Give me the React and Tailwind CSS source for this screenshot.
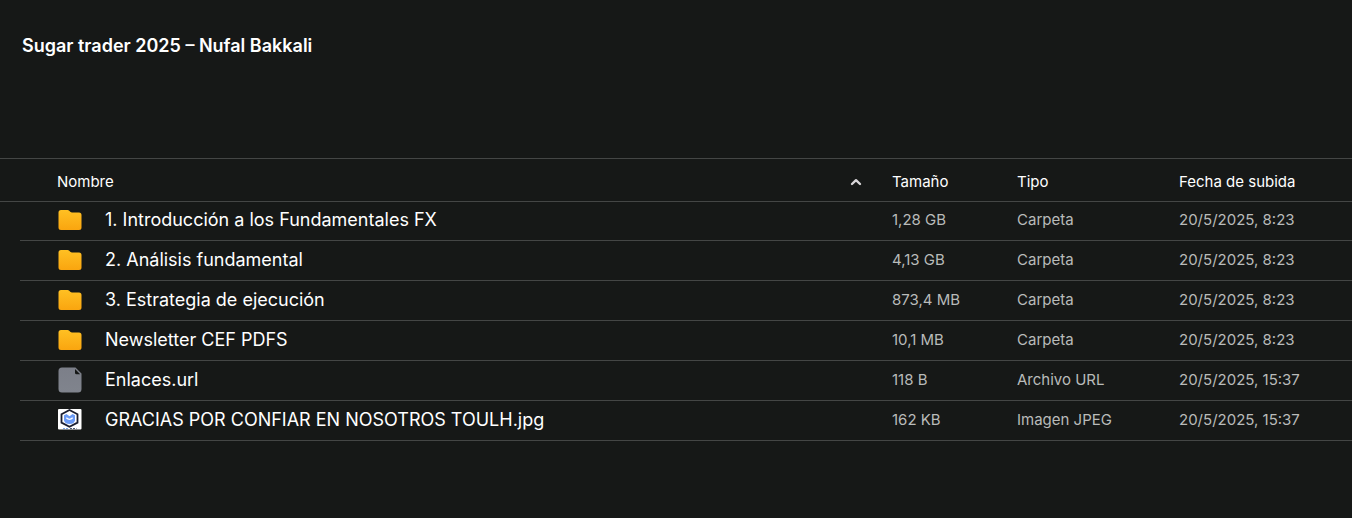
const files = [
  { name: "1. Introducción a los Fundamentales FX", size: "1,28 GB", type: "Carpeta", date: "20/5/2025, 8:23", icon: "folder" },
  { name: "2. Análisis fundamental", size: "4,13 GB", type: "Carpeta", date: "20/5/2025, 8:23", icon: "folder" },
  { name: "3. Estrategia de ejecución", size: "873,4 MB", type: "Carpeta", date: "20/5/2025, 8:23", icon: "folder" },
  { name: "Newsletter CEF PDFS", size: "10,1 MB", type: "Carpeta", date: "20/5/2025, 8:23", icon: "folder" },
  { name: "Enlaces.url", size: "118 B", type: "Archivo URL", date: "20/5/2025, 15:37", icon: "file" },
  { name: "GRACIAS POR CONFIAR EN NOSOTROS TOULH.jpg", size: "162 KB", type: "Imagen JPEG", date: "20/5/2025, 15:37", icon: "image" },
]

function FolderIcon() {
  return (
    <svg className="block h-6 w-6 shrink-0" viewBox="0 0 24 24">
      <defs>
        <linearGradient id="folder" x1="0" y1="0" x2="0" y2="1">
          <stop offset="0" stopColor="#ffc023" />
          <stop offset="1" stopColor="#faa50f" />
        </linearGradient>
      </defs>
      <path
        fill="url(#folder)"
        d="M.5 4.500A2.500 2.500 0 0 1 3 2H9.500Q10.500 2 11.300 2.800L12.200 3.700Q13 4.500 14 4.500H21A2.500 2.500 0 0 1 23.500 7V19.500A2.500 2.500 0 0 1 21 22H3A2.500 2.500 0 0 1 .5 19.500Z"
      />
    </svg>
  )
}

function FileIcon() {
  return (
    <svg className="block h-6 w-6 shrink-0 overflow-visible" viewBox="0 0 24 24">
      <defs>
        <linearGradient id="file" x1="0" y1="0" x2="0" y2="1">
          <stop offset="0" stopColor="#7c7f89" />
          <stop offset="1" stopColor="#80848d" />
        </linearGradient>
      </defs>
      <path fill="url(#file)" d="M4-.5H17.500L23.500 5.500V21A3.500 3.500 0 0 1 20 24.500H4A3.500 3.500 0 0 1 .5 21V3A3.500 3.500 0 0 1 4-.5Z" />
      <path fill="#161817" d="M17 1L22.200 6.200H18.500A1.500 1.500 0 0 1 17 4.700Z" />
    </svg>
  )
}

function ImageIcon() {
  return (
    <svg className="block h-6 w-6 shrink-0" viewBox="0 0 24 24">
      <rect x="0" y="1" width="23.500" height="20.500" rx="1" fill="#fff" />
      <path d="M11.500 2L19.500 6.200V14.600L11.500 18.800L3.500 14.600V6.200Z" fill="none" stroke="#1b1e30" strokeWidth="1.800" />
      <path d="M6 7.200L8.500 6L11.500 8.200L14.500 6L17 7.200V12.500Q16 16 11.500 16Q7 16 6 12.500Z" fill="#6c9bf5" />
      <path d="M8.300 9.800Q11.500 13 14.700 9.800" fill="none" stroke="#fff" strokeWidth="1.300" />
      <path d="M5 20.500H11" stroke="#7ba4e8" strokeDasharray="2 1" />
      <path d="M12 20.500H18.500" stroke="#4c5872" strokeDasharray="2 1" />
    </svg>
  )
}

const icons = { folder: FolderIcon, file: FileIcon, image: ImageIcon }

export default function App() {
  return (
    <main className="min-h-screen bg-[#161817] font-['Inter',sans-serif] text-white">
      <header className="px-[22px] pt-8 pb-[98px]">
        <h1 className="text-lg font-semibold">Sugar trader 2025 – Nufal Bakkali</h1>
      </header>

      <table className="w-full table-fixed border-separate border-spacing-0 text-left">
        <colgroup>
          <col className="w-5" />
          <col />
          <col className="w-[125px]" />
          <col className="w-[162px]" />
          <col className="w-[173px]" />
        </colgroup>
        <thead>
          <tr className="h-11 text-[15px] [&>*]:border-y [&>*]:border-[#444645] [&>*]:p-0 [&>*]:pt-1 [&>*]:font-normal">
            <td></td>
            <th scope="col" aria-sort="ascending">
              <button className="flex w-full items-center justify-between pr-[30px] pl-[37px]">
                Nombre
                <svg className="h-3 w-3" viewBox="0 0 12 12" fill="none" stroke="#d8d5d8" strokeWidth="2.400" strokeLinecap="round" strokeLinejoin="round">
                  <path d="M2 8L6 4.200L10 8" />
                </svg>
              </button>
            </th>
            <th scope="col">Tamaño</th>
            <th scope="col">Tipo</th>
            <th scope="col">Fecha de subida</th>
          </tr>
        </thead>
        <tbody>
          {files.map((file) => {
            const Icon = icons[file.icon]
            return (
              <tr key={file.name} className="h-10 text-[15px]/[22px] text-[#b9bbba] first:h-[39px] [&>td]:p-0 [&>td]:pb-0.5 [&>td+td]:border-b [&>td+td]:border-[#444645]">
                <td></td>
                <td>
                  <div className="flex items-center gap-[23px] pl-[38px] text-lg text-white">
                    <Icon />
                    <span className="truncate">{file.name}</span>
                  </div>
                </td>
                <td>{file.size}</td>
                <td>{file.type}</td>
                <td>{file.date}</td>
              </tr>
            )
          })}
        </tbody>
      </table>
    </main>
  )
}
